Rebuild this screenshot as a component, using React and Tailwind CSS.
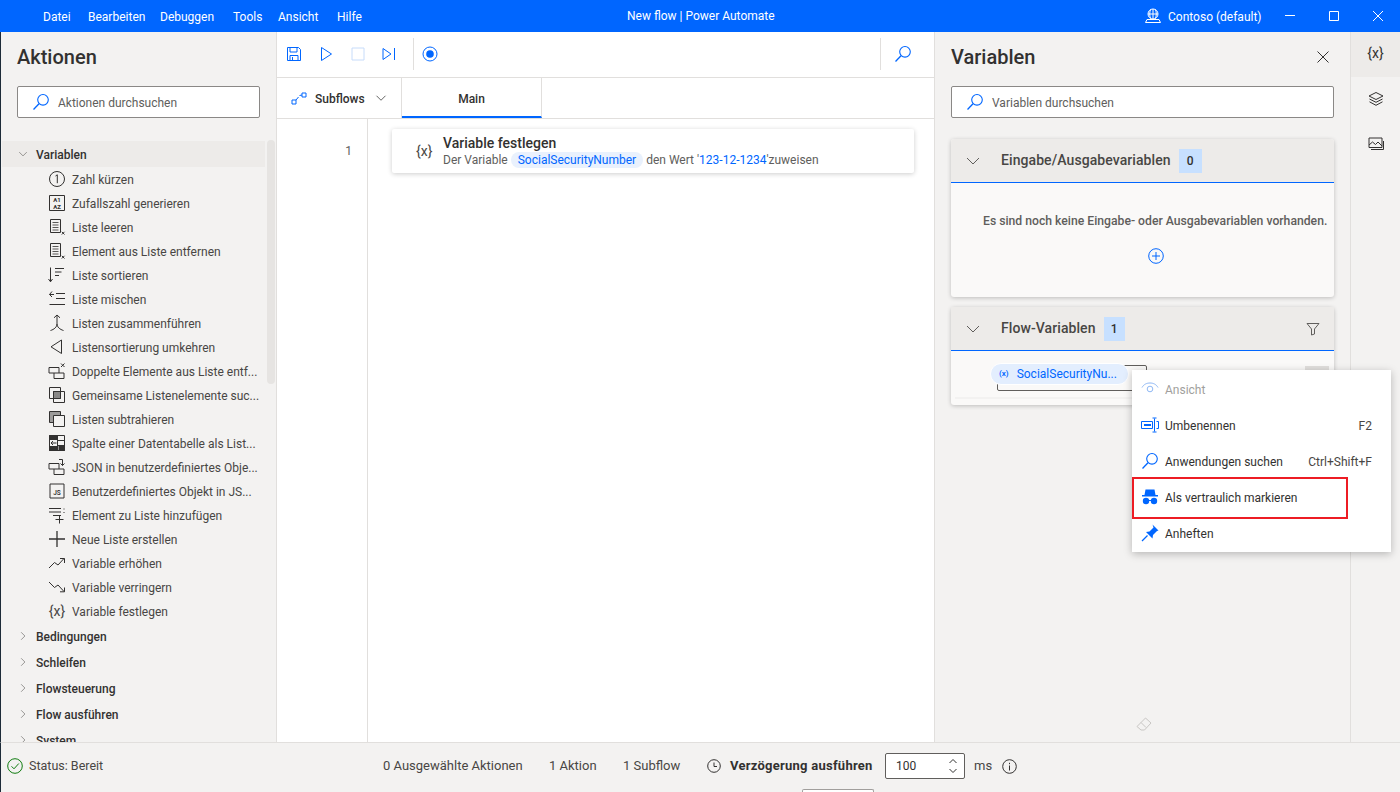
import React from 'react';

const Ic = ({ s = 18, vb = 18, className = '', children, fill = 'none', sw = 1 }) => (
  <svg width={s} height={s} viewBox={`0 0 ${vb} ${vb}`} fill={fill} stroke="currentColor" strokeWidth={sw} className={`shrink-0 ${className}`}>
    {children}
  </svg>
);

const SearchIcon = ({ s = 18 }) => (
  <Ic s={s} vb={18} className="text-[#0066ff]">
    <circle cx="11" cy="6.800" r="5.300" strokeWidth="1.100" />
    <path d="M7 10.800 1.500 16.500" strokeWidth="1.300" />
  </Ic>
);

const Chevron = ({ dir = 'down', className = '' }) => (
  <svg viewBox="0 0 16 16" fill="none" stroke="currentColor" className={`shrink-0 ${className}`}>
    {dir === 'down' ? <path d="M2 5l6 6 6-6" /> : <path d="M5 2l6 6-6 6" />}
  </svg>
);

const listX = (
  <>
    <path d="M2.500 1.500h10v13h-10z" />
    <path d="M4.500 4.500h6M4.500 7h6M4.500 9.500h6M4.500 12h6" strokeWidth=".8" />
    <path d="M13.800 13.800l2.700 2.700M16.500 13.800l-2.700 2.700" />
  </>
);

const treeItems = [
  ['Zahl kürzen', <Ic><circle cx="9" cy="9" r="7.500" /><path d="M7.500 6 9.300 4.800v8.400" /></Ic>],
  ['Zufallszahl generieren', <Ic><path d="M1.500 1.500h15v15h-15z" /><text x="9" y="8" fontSize="6" fontWeight="700" textAnchor="middle" fill="currentColor" stroke="none">A1</text><text x="9" y="14.500" fontSize="6" fontWeight="700" textAnchor="middle" fill="currentColor" stroke="none">AZ</text></Ic>],
  ['Liste leeren', <Ic>{listX}</Ic>],
  ['Element aus Liste entfernen', <Ic>{listX}</Ic>],
  ['Liste sortieren', <Ic><path d="M2.500 1.500v14M.500 13l2 2.800 2-2.800M7 2.500h9M7 6h6.500M7 9.500h4" /></Ic>],
  ['Liste mischen', <Ic><path d="M8 3.500h9M8 8.500h9M1.500 14.500h15.500M4 1.500 1.500 4.500 4 7M1.500 4.500H6" /></Ic>],
  ['Listen zusammenführen', <Ic><path d="M9 1v9M6 3.800 9 1l3 2.800M2.500 16.500C6 15.500 9 13 9 10c0 3 3 5.500 6.500 6.500" /></Ic>],
  ['Listensortierung umkehren', <Ic><path d="M13.500 2v13.500L3 8.800z" /></Ic>],
  ['Doppelte Elemente aus Liste entf...', <Ic><path d="M1 5.500h10v5.500H1zM6 11v5.500h10V11H11M13 1.500l3.500 3.500M16.500 1.500 13 5" /></Ic>],
  ['Gemeinsame Listenelemente suc...', <Ic><path d="M1.500 1.500h11v11h-11zM5.500 5.500h11v11h-11z" /><path d="M5.500 5.500h7v7h-7z" fill="currentColor" fillOpacity=".55" /></Ic>],
  ['Listen subtrahieren', <Ic><path d="M1.500 1.500h11v11h-11z" fill="currentColor" fillOpacity=".45" /><path d="M5.500 5.500h11v11h-11z" fill="#f3f2f1" /></Ic>],
  ['Spalte einer Datentabelle als List...', <Ic><path d="M1.500 1.500h15v15h-15zM9.500 1.500v15M9.500 6.500h7M9.500 11.500h7" /><path d="M1.500 1.500h8v4h-8zM1.500 12.500h8v4h-8zM11 11.500h5.500v5H11z" fill="currentColor" /><path d="M8.500 9H3M5 7 3 9l2 2" /></Ic>],
  ['JSON in benutzerdefiniertes Obje...', <Ic><path d="M1 5.500h10v5.500H1zM6 11v5.500h10V11H11M11 1.500h3.500v6M12.500 5.500l2 2 2-2" /></Ic>],
  ['Benutzerdefiniertes Objekt in JS...', <Ic><path d="M2 2h14v14H2z" /><text x="9" y="13" fontSize="6.500" fontWeight="600" textAnchor="middle" fill="currentColor" stroke="none">JS</text></Ic>],
  ['Element zu Liste hinzufügen', <Ic><path d="M1 2.500h12M1 6h12M5 9.500h8M16 2.500v1M16 6v1M11.500 9.500v8M7.500 13.500h8" /></Ic>],
  ['Neue Liste erstellen', <Ic><path d="M9 1v16M1 9h16" strokeWidth="1.300" /></Ic>],
  ['Variable erhöhen', <Ic><path d="M1 14l5.500-5.500 3.500 2.500 6-6.500M12 4.500h4.500V9" /></Ic>],
  ['Variable verringern', <Ic><path d="M1 4l5.500 5.500L10 7l6 6.500M12 13.800h4.500V9.500" /></Ic>],
  ['Variable festlegen', <span className="w-[18px] text-center text-[14px] leading-none text-[#484644]">{'{x}'}</span>],
];

const groups = ['Bedingungen', 'Schleifen', 'Flowsteuerung', 'Flow ausführen', 'System'];

const menuItems = ['Datei', 'Bearbeiten', 'Debuggen', 'Tools', 'Ansicht', 'Hilfe'];
const menuWidths = ['w-[45px]', 'w-[72px]', 'w-[73px]', 'w-[45px]', 'w-[59px]', 'w-[40px]'];

const SearchBox = ({ placeholder }) => (
  <div className="flex h-[32px] items-center gap-[8px] rounded-[2px] border border-[#8a8886] bg-white pl-[14px] text-[12px] text-[#605e5c]">
    <SearchIcon />
    <span className="pt-[2px]">{placeholder}</span>
  </div>
);

const LeftPanel = () => (
  <aside className="relative flex w-[277px] shrink-0 flex-col overflow-hidden border-r border-l border-r-[#e1dfdd] border-l-[#1d2b38] bg-[#f3f2f1]">
    <h2 className="pt-[12px] pl-[16px] text-[20px] leading-[26px] font-medium text-[#323130]">Aktionen</h2>
    <div className="mt-[16px] ml-[16px] w-[243px]">
      <SearchBox placeholder="Aktionen durchsuchen" />
    </div>
    <div className="mt-[23px] w-[264px] pl-[1px]">
      <div className="flex h-[26px] items-center gap-[8px] bg-[#edebe9] pl-[16px] text-[12px] font-medium text-[#323130]">
        <Chevron className="size-[10px] text-[#605e5c]" />
        <span className="pt-[2px]">Variablen</span>
      </div>
      {treeItems.map(([label, icon]) => (
        <div key={label} className="flex h-[24px] items-center gap-[6px] pl-[46px] text-[12px] whitespace-nowrap text-[#484644]">
          <span className="flex w-[18px] shrink-0 justify-center text-[#323130]">{icon}</span>
          <span className="pt-[2px]">{label}</span>
        </div>
      ))}
      {groups.map((g) => (
        <div key={g} className="flex h-[26px] items-center gap-[8px] pl-[16px] text-[12px] font-medium text-[#323130]">
          <Chevron dir="right" className="size-[10px] text-[#605e5c]" />
          <span className="pt-[2px]">{g}</span>
        </div>
      ))}
    </div>
    <div className="absolute top-[108px] left-[266px] h-[244px] w-[8px] rounded-[4px] bg-[#e6e4e2]" />
  </aside>
);

const CenterPanel = () => (
  <main className="flex w-[658px] shrink-0 flex-col border-r border-[#e1dfdd] bg-white">
    <div className="flex h-[46px] items-center border-b border-[#e1dfdd] pb-[1px] pl-[9px] text-[#0066ff]">
      <Ic s={16} vb={16}>
        <path d="M1.500 1.500h11l2 2v11h-13z" />
        <path d="M4 1.500v4.500h7V1.500M4 14.500v-5h8v5M6.500 11v3.500" />
      </Ic>
      <span className="ml-[16px]"><Ic s={16} vb={16}><path d="M3.500 1.500v13L13.500 8z" /></Ic></span>
      <span className="ml-[16px] text-[#c7dcfa]"><Ic s={16} vb={16}><path d="M2 2h12v12H2z" /></Ic></span>
      <span className="ml-[15px]"><Ic s={16} vb={16}><path d="M2 2.500v11L10 8zM13.500 2v12" /></Ic></span>
      <span className="mr-[8px] ml-[16px] h-[32px] w-px bg-[#e1dfdd]" />
      <Ic s={16} vb={16}><circle cx="8" cy="8" r="7" /><circle cx="8" cy="8" r="3.800" fill="currentColor" stroke="none" /></Ic>
      <span className="mr-[22px] ml-auto flex h-[32px] items-center border-l border-[#e1dfdd] pl-[13px]"><SearchIcon s={18} /></span>
    </div>
    <div className="flex h-[41px] border-b border-[#e1dfdd]">
      <div className="flex w-[125px] items-center border-r border-[#e1dfdd] pl-[14px] text-[12px] font-medium text-[#323130]">
        <span className="text-[#0066ff]"><Ic s={16} vb={16}><path d="M1 10h4v4H1zM11 3h4v4h-4zM5 10l2.500-3M8.500 5.500 11 5" /></Ic></span>
        <span className="ml-[8px] pt-[2px]">Subflows</span>
        <Chevron className="ml-[10px] size-[12px] text-[#323130]" />
      </div>
      <div className="flex w-[140px] items-center justify-center border-r border-b-2 border-r-[#e1dfdd] border-b-[#0066ff] pt-[3px] text-[12px] font-medium text-[#323130]">Main</div>
    </div>
    <div className="flex min-h-0 flex-1">
      <div className="w-[91px] shrink-0 border-r border-[#e1dfdd] pt-[24px] pr-[15px] text-right text-[12px] leading-[16px] text-[#605e5c]">1</div>
      <div className="pt-[10px] pl-[24px]">
        <div className="flex h-[44px] w-[522px] items-center rounded-[2px] bg-white shadow-[0_1px_5px_rgba(0,0,0,0.2)]">
          <span className="w-[51px] pl-[24px] text-[14px] text-[#484644]">{'{x}'}</span>
          <div>
            <div className="text-[14px] leading-[18px] font-medium text-[#323130]">Variable festlegen</div>
            <div className="flex items-center text-[12px] leading-[16px] whitespace-nowrap text-[#605e5c]">
              <span>Der Variable</span>
              <span className="mx-[3px] rounded-full bg-[#e9f1fd] px-[7px] text-[#0066ff]">SocialSecurityNumber</span>
              <span>den Wert '</span>
              <span className="text-[#0066ff]">123-12-1234</span>
              <span>'zuweisen</span>
            </div>
          </div>
        </div>
      </div>
    </div>
  </main>
);

const PanelHeader = ({ title, count, children }) => (
  <div className="flex h-[44px] items-center border-b border-[#0066ff] bg-[#edebe9] pl-[14px]">
    <Chevron className="size-[16px] text-[#605e5c]" />
    <span className="ml-[20px] text-[14px] font-medium tracking-[0.08px] text-[#484644]">{title}</span>
    <span className={`ml-[8px] flex h-[24px] items-center justify-center bg-[#c7e0ff] text-[12px] font-medium text-[#323130] ${count === '0' ? 'w-[23px]' : 'w-[21px]'}`}>{count}</span>
    {children}
  </div>
);

const ContextItem = ({ icon, label, shortcut, muted }) => (
  <div className={`flex h-[36px] items-center pr-[19px] pl-[9px] text-[12px] ${muted ? 'text-[#a19f9d]' : 'text-[#323130]'}`}>
    <span className={`flex w-[18px] justify-center ${muted ? 'text-[#8fb8f5]' : 'text-[#0066ff]'}`}>{icon}</span>
    <span className="ml-[6px] pt-[2px]">{label}</span>
    {shortcut && <span className="ml-auto pt-[2px] text-[#484644]">{shortcut}</span>}
  </div>
);

const RightPanel = () => (
  <section className="relative w-[415px] shrink-0 bg-[#f3f2f1] px-[16px]">
    <div className="flex h-[50px] items-center justify-between">
      <h2 className="text-[20px] font-medium text-[#323130]">Variablen</h2>
      <svg width="12" height="12" viewBox="0 0 12 12" stroke="#323130" className="mr-[5px]"><path d="M.5.5l11 11M11.500.5l-11 11" /></svg>
    </div>
    <div className="mt-[4px]">
      <SearchBox placeholder="Variablen durchsuchen" />
    </div>
    <div className="mt-[21px] h-[158px] overflow-hidden rounded-[3px] bg-[#faf9f8] shadow-[0_1px_4px_rgba(0,0,0,0.22)]">
      <PanelHeader title="Eingabe/Ausgabevariablen" count="0" />
      <p className="mt-[29px] pl-[32px] text-[12.200px] font-medium whitespace-nowrap text-[#605e5c]">Es sind noch keine Eingabe- oder Ausgabevariablen vorhanden.</p>
      <div className="mt-[18px] flex justify-center pl-[26px] text-[#0066ff]">
        <Ic s={16} vb={16}><circle cx="8" cy="8" r="7.300" /><path d="M8 4v8M4 8h8" /></Ic>
      </div>
    </div>
    <div className="relative mt-[10px] h-[98px] rounded-[3px] bg-[#faf9f8] shadow-[0_1px_4px_rgba(0,0,0,0.22)]">
      <PanelHeader title="Flow-Variablen" count="1">
        <span className="mr-[14px] ml-auto text-[#605e5c]">
          <Ic s={14} vb={14}><path d="M1 1.500h12L8.500 7v5L5.500 13V7z" /></Ic>
        </span>
      </PanelHeader>
      <div className="absolute top-[58px] left-[46px] h-[26px] w-[150px] rounded-[2px] border border-[#605e5c]" />
      <div className="absolute top-[56px] left-[39px] flex h-[22px] w-[139px] items-center gap-[8px] rounded-full border border-white bg-[#e3eefe] pl-[8px] text-[12px] text-[#0066ff]">
        <span className="text-[8px] font-semibold">(x)</span>
        <span>SocialSecurityNu...</span>
      </div>
      <div className="absolute top-[59px] right-[5px] h-[24px] w-[24px] bg-[#e1dfdd]" />
      <div className="absolute top-[90px] right-0 left-[4px] h-[2px] bg-[#f3f2f1]" />
    </div>
    <div className="absolute top-[338px] left-[197px] z-10 w-[259px] bg-white py-[1px] shadow-[0_2px_8px_rgba(0,0,0,0.25)]">
      <ContextItem muted label="Ansicht" icon={<Ic s={18} vb={18}><path d="M1 7.500C3 4 6 3 9 3s6 1 8 4.500" /><circle cx="9" cy="9" r="2.800" /></Ic>} />
      <ContextItem label="Umbenennen" shortcut="F2" icon={<Ic s={18} vb={18}><path d="M.5 5.500h11v7H.5z" /><path d="M3 9h7" strokeWidth="2" /><path d="M13.500 2.500v13M11.500 2h4M11.500 16h4M15.500 5.500h2v7h-2" /></Ic>} />
      <ContextItem label="Anwendungen suchen" shortcut="Ctrl+Shift+F" icon={<SearchIcon s={18} />} />
      <ContextItem label="Als vertraulich markieren" icon={<Ic s={18} vb={18} fill="currentColor"><path d="M4.500 1.500h9l1 5.500h2.500v1.500H1V7h2.500z" stroke="none" /><circle cx="5" cy="13" r="3.200" stroke="none" /><circle cx="13" cy="13" r="3.200" stroke="none" /><path d="M7 12.500h4" fill="none" /></Ic>} />
      <ContextItem label="Anheften" icon={<Ic s={18} vb={18} fill="currentColor"><path d="M11.500 .5l6 6-1.500.5-4 4-.5 3.500-6.500-6.500 3.500-.5 4-4z" stroke="none" /><path d="M6.500 11.500 1 17" strokeWidth="1.300" /></Ic>} />
    </div>
    <div className="pointer-events-none absolute top-[445px] left-[197px] z-20 h-[42px] w-[216px] border-2 border-[#ed1c24]" />
    <div className="absolute top-[684px] left-[201px] text-[#c8c6c4]">
      <Ic s={16} vb={16}><path d="M1 10.500 9.500 2 15 7l-6.500 7H5zM5 6.500l5 5" /></Ic>
    </div>
  </section>
);

const Rail = () => (
  <nav className="w-[50px] shrink-0 border-l border-[#e1dfdd] bg-[#f3f2f1] text-[#323130]">
    <div className="flex h-[45px] items-center justify-center bg-[#edebe9] pb-[2px] text-[14px]">{'{x}'}</div>
    <div className="flex h-[45px] items-center justify-center pb-[2px]">
      <Ic s={16} vb={16}><path d="M8 1.500 15 5l-7 3.500L1 5zM1.500 8 8 11.300 14.500 8M1.500 10.800 8 14.300l6.500-3.500" /></Ic>
    </div>
    <div className="flex h-[45px] items-center justify-center pb-[2px]">
      <Ic s={16} vb={16}><path d="M1 2h13v9.500H1zM1 9l3.500-3 3 2.500L10 6l4 4M15.500 5v8.500H3" /></Ic>
    </div>
  </nav>
);

const StatusBar = () => (
  <footer className="relative flex h-[50px] shrink-0 items-center border-t border-l border-t-[#e1dfdd] border-l-[#1d2b38] bg-[#f3f2f1] pb-[3px] text-[13px] whitespace-nowrap text-[#484644]">
    <span className="ml-[6px] text-[#107c10]">
      <Ic s={16} vb={16}><circle cx="8" cy="8" r="7.300" /><path d="M4.500 8.300 7 10.800l4.800-5.300" /></Ic>
    </span>
    <span className="ml-[6px] w-[354px] text-[12.500px]">Status: Bereit</span>
    <span className="w-[166px]">0 Ausgewählte Aktionen</span>
    <span className="w-[74px]">1 Aktion</span>
    <span className="w-[84px]">1 Subflow</span>
    <span className="text-[#323130]">
      <Ic s={14} vb={14}><circle cx="7" cy="7" r="6.300" /><path d="M7 3.500V7.500H10" /></Ic>
    </span>
    <span className="ml-[9px] w-[155px] font-bold tracking-[0.25px] text-[#323130]">Verzögerung ausführen</span>
    <div className="flex h-[26px] w-[80px] items-center justify-between rounded-[2px] border border-[#605e5c] bg-white pr-[6px] pl-[10px] text-[12px] text-[#323130]">
      <span>100</span>
      <svg width="10" height="18" viewBox="0 0 10 18" fill="none" stroke="#323130"><path d="M1.500 6 5 2.500 8.500 6M1.500 12 5 15.500 8.500 12" /></svg>
    </div>
    <span className="ml-[9px]">ms</span>
    <span className="ml-[10px] text-[#323130]">
      <Ic s={15} vb={15}><circle cx="7.500" cy="7.500" r="6.800" /><path d="M7.500 6.500v5M7.500 3.800v1.400" /></Ic>
    </span>
    <div className="absolute bottom-0 left-[801px] h-[3px] w-[72px] rounded-t-[2px] border-x border-t border-[#a19f9d] bg-white" />
  </footer>
);

export default function App() {
  return (
    <div className="flex h-[792px] w-[1400px] flex-col overflow-hidden bg-[#f3f2f1] font-['Roboto','Noto_Sans',sans-serif]">
      <header className="relative flex h-[32px] shrink-0 items-center bg-[#0066ff] text-[12px] whitespace-nowrap text-white">
        <nav className="ml-[43px] flex pt-[2px]">
          {menuItems.map((m, i) => (
            <span key={m} className={menuWidths[i]}>{m}</span>
          ))}
        </nav>
        <span className="absolute left-[627px]">New flow | Power Automate</span>
        <div className="ml-auto flex items-center">
          <Ic s={16} vb={16}>
            <circle cx="8" cy="6" r="5" />
            <path d="M3 6h10M8 1v10M5.500 1.500c-1 3-1 6 0 9M10.500 1.500c1 3 1 6 0 9M.500 14.500h15L14 11.500H2z" />
          </Ic>
          <span className="ml-[7px] w-[116px] pt-[2px]">Contoso (default)</span>
          <svg width="12" height="12" viewBox="0 0 12 12" stroke="white" fill="none"><path d="M1 5.500h10" /></svg>
          <svg width="12" height="12" viewBox="0 0 12 12" stroke="white" fill="none" className="ml-[32px]"><path d="M1.500 1.500h9v9h-9z" /></svg>
          <svg width="12" height="12" viewBox="0 0 12 12" stroke="white" fill="none" className="mr-[16px] ml-[32px]"><path d="M1 1l10 10M11 1 1 11" /></svg>
        </div>
      </header>
      <div className="flex min-h-0 flex-1">
        <LeftPanel />
        <CenterPanel />
        <RightPanel />
        <Rail />
      </div>
      <StatusBar />
    </div>
  );
}
